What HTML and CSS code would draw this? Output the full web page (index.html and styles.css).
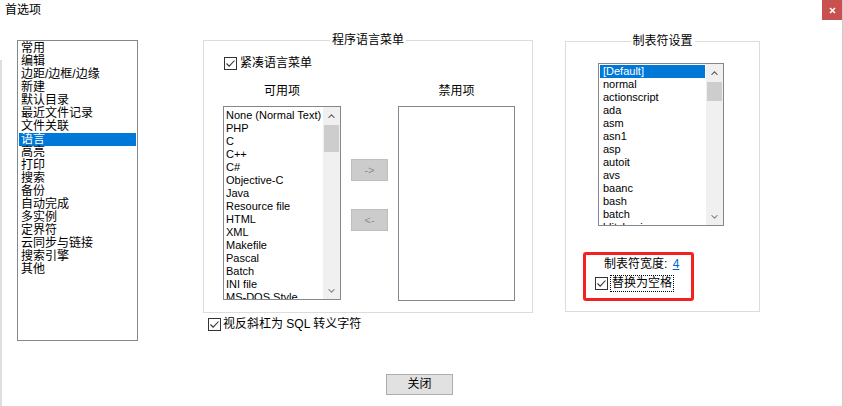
FILE: index.html
```html
<!DOCTYPE html>
<html lang="zh-CN">
<head>
<meta charset="utf-8">
<title>首选项</title>
<link rel="stylesheet" href="styles.css">
</head>
<body>
<div class="window">
  <div class="titlebar">
    <span class="title">首选项</span>
    <span class="close"><svg width="7" height="7" viewBox="0 0 7 7"><path d="M1 1L6 6M6 1L1 6" stroke="#fff" stroke-width="1.6"/></svg></span>
  </div>
  <div class="main">
    <div class="navlist">
      <div class="item">常用</div>
      <div class="item">编辑</div>
      <div class="item">边距/边框/边缘</div>
      <div class="item">新建</div>
      <div class="item">默认目录</div>
      <div class="item">最近文件记录</div>
      <div class="item">文件关联</div>
      <div class="item sel">语言</div>
      <div class="item">高亮</div>
      <div class="item">打印</div>
      <div class="item">搜索</div>
      <div class="item">备份</div>
      <div class="item">自动完成</div>
      <div class="item">多实例</div>
      <div class="item">定界符</div>
      <div class="item">云同步与链接</div>
      <div class="item">搜索引擎</div>
      <div class="item">其他</div>
    </div>
    <div class="midcol">
      <div class="group group-lang">
        <span class="gtitle">程序语言菜单</span>
        <div class="check">
          <span class="box"><svg width="11" height="11" viewBox="0 0 11 11"><path d="M1.5 5.5L4.2 8.2L9.5 2.5" fill="none" stroke="#333" stroke-width="1.1"/></svg></span>
          <span class="ctext">紧凑语言菜单</span>
        </div>
        <div class="lists">
          <div class="lcol">
            <div class="lcap">可用项</div>
            <div class="listbox lb-avail">
              <div class="items">
                <div class="row">None (Normal Text)</div>
                <div class="row">PHP</div>
                <div class="row">C</div>
                <div class="row">C++</div>
                <div class="row">C#</div>
                <div class="row">Objective-C</div>
                <div class="row">Java</div>
                <div class="row">Resource file</div>
                <div class="row">HTML</div>
                <div class="row">XML</div>
                <div class="row">Makefile</div>
                <div class="row">Pascal</div>
                <div class="row">Batch</div>
                <div class="row">INI file</div>
                <div class="row">MS-DOS Style</div>
              </div>
              <div class="sb sb-avail">
                <div class="arrow"><svg width="7" height="4" viewBox="0 0 7 4"><path d="M0.5 3.8L3.5 0.8L6.5 3.8" fill="none" stroke="#606060" stroke-width="1.1"/></svg></div>
                <div class="thumb"></div>
                <div class="track"></div>
                <div class="arrow"><svg width="7" height="4" viewBox="0 0 7 4"><path d="M0.5 0.2L3.5 3.2L6.5 0.2" fill="none" stroke="#8a8a8a" stroke-width="1.1"/></svg></div>
              </div>
            </div>
          </div>
          <div class="movebtns">
            <div class="mbtn">-&gt;</div>
            <div class="mbtn">&lt;-</div>
          </div>
          <div class="lcol">
            <div class="lcap">禁用项</div>
            <div class="listbox lb-disabled"></div>
          </div>
        </div>
      </div>
      <div class="check sqlcheck">
        <span class="box"><svg width="11" height="11" viewBox="0 0 11 11"><path d="M1.5 5.5L4.2 8.2L9.5 2.5" fill="none" stroke="#333" stroke-width="1.1"/></svg></span>
        <span class="ctext">视反斜杠为 SQL 转义字符</span>
      </div>
    </div>
    <div class="group group-tab">
      <span class="gtitle">制表符设置</span>
      <div class="listbox lb-tab">
        <div class="items">
          <div class="row sel">[Default]</div>
          <div class="row">normal</div>
          <div class="row">actionscript</div>
          <div class="row">ada</div>
          <div class="row">asm</div>
          <div class="row">asn1</div>
          <div class="row">asp</div>
          <div class="row">autoit</div>
          <div class="row">avs</div>
          <div class="row">baanc</div>
          <div class="row">bash</div>
          <div class="row">batch</div>
          <div class="row">blitzbasic</div>
        </div>
        <div class="sb sb-tab">
          <div class="arrow"><svg width="7" height="4" viewBox="0 0 7 4"><path d="M0.5 3.8L3.5 0.8L6.5 3.8" fill="none" stroke="#606060" stroke-width="1.1"/></svg></div>
          <div class="thumb"></div>
          <div class="track"></div>
          <div class="arrow"><svg width="7" height="4" viewBox="0 0 7 4"><path d="M0.5 0.2L3.5 3.2L6.5 0.2" fill="none" stroke="#8a8a8a" stroke-width="1.1"/></svg></div>
        </div>
      </div>
      <div class="redbox">
        <div class="tabwidth">制表符宽度: <span class="link">4</span></div>
        <div class="check replace">
          <span class="box"><svg width="11" height="11" viewBox="0 0 11 11"><path d="M1.5 5.5L4.2 8.2L9.5 2.5" fill="none" stroke="#333" stroke-width="1.1"/></svg></span>
          <span class="focus">替换为空格</span>
        </div>
      </div>
    </div>
  </div>
  <div class="footer">
    <div class="btn-close">关闭</div>
  </div>
</div>
</body>
</html>
```

FILE: styles.css
```css
* {
  box-sizing: border-box;
  margin: 0;
  padding: 0;
}

body {
  margin: 0;
  background: #fff;
  font-family: "Liberation Sans", "Noto Sans CJK SC", sans-serif;
  font-size: 12px;
  color: #000;
}

.window {
  width: 843px;
  height: 406px;
  display: flex;
  flex-direction: column;
  border-right: 1px solid #cccccc;
  background:
    linear-gradient(#fff, #fff) 0 0 / 2px 60px no-repeat,
    linear-gradient(to right, #dedede 2px, #fff 2px);
}

.titlebar {
  height: 20px;
  display: flex;
  justify-content: space-between;
  padding-left: 5px;
}

.title {
  font-size: 12px;
  line-height: 20px;
}

.close {
  width: 20px;
  height: 20px;
  background: #c8504e;
  display: flex;
  align-items: center;
  justify-content: center;
}

.main {
  display: flex;
  align-items: flex-start;
  margin-top: 20px;
  padding-left: 17px;
}

.navlist {
  width: 121px;
  height: 301px;
  border: 1px solid #828790;
  padding: 1px;
}

.navlist .item {
  height: 13px;
  line-height: 13px;
  padding-left: 2px;
  white-space: nowrap;
}

.sel {
  background: #0078d7;
  color: #fff;
}

.midcol {
  margin-left: 65px;
  display: flex;
  flex-direction: column;
}

.group {
  border: 1px solid #dcdcdc;
  position: relative;
}

.gtitle {
  position: absolute;
  top: -8px;
  left: 50%;
  transform: translateX(-50%);
  background: #fff;
  padding: 0 2px;
  line-height: 14px;
  white-space: nowrap;
}

.group-lang {
  width: 330px;
  height: 273px;
  padding: 16px 0 0 20px;
}

.check {
  display: flex;
  align-items: center;
  height: 13px;
  line-height: 13px;
  white-space: nowrap;
}

.box {
  width: 13px;
  height: 13px;
  border: 1px solid #333;
  background: #fff;
  margin-right: 3px;
  display: flex;
  flex: none;
}

.lists {
  display: flex;
  margin-top: 15px;
  margin-left: -1px;
}

.lcap {
  height: 21px;
  line-height: 13px;
  text-align: center;
}

.listbox {
  border: 1px solid #828790;
  display: flex;
  background: #fff;
}

.items {
  flex: 1;
  padding: 1px;
  overflow: hidden;
}

.items .row {
  height: 13px;
  line-height: 13px;
  font-size: 11px;
  white-space: nowrap;
}

.lb-avail {
  width: 118px;
  height: 194px;
}

.lb-avail .items {
  padding-top: 2px;
  padding-left: 2px;
}

.sb {
  width: 17px;
  background: #f0f0f0;
  display: flex;
  flex-direction: column;
  flex: none;
}

.sb .arrow {
  height: 17px;
  display: flex;
  align-items: center;
  justify-content: center;
  flex: none;
}

.sb .thumb {
  margin: 1px 1px 0;
  background: #cdcdcd;
  flex: none;
}

.sb .track {
  flex: 1;
}

.sb-avail .thumb {
  height: 27px;
}

.sb-tab .thumb {
  height: 19px;
}

.movebtns {
  width: 37px;
  margin: 0 10px;
  padding-top: 74px;
  display: flex;
  flex-direction: column;
  gap: 28px;
}

.mbtn {
  height: 22px;
  background: #cccccc;
  border: 1px solid #bfbfbf;
  color: #8c8c8c;
  font-size: 11px;
  line-height: 20px;
  text-align: center;
}

.lb-disabled {
  width: 117px;
  height: 195px;
}

.sqlcheck {
  margin-top: 5px;
  margin-left: 5px;
}

.sqlcheck .box {
  margin-right: 2px;
}

.group-tab {
  width: 195px;
  height: 271px;
  margin-left: 32px;
  margin-top: 1px;
  padding: 21px 0 0 32px;
}

.lb-tab {
  width: 126px;
  height: 163px;
}

.lb-tab .row {
  padding-left: 3px;
}

.redbox {
  margin-left: -15px;
  margin-top: 26px;
  width: 111px;
  height: 49px;
  border: 3px solid #f52020;
  border-radius: 3px;
  padding: 3px 0 0 18px;
}

.tabwidth {
  line-height: 13px;
  white-space: nowrap;
}

.link {
  color: #0066cc;
  text-decoration: underline;
  margin-left: 2px;
}

.replace {
  margin-top: 4px;
  margin-left: -9px;
  height: 17px;
}

.replace .box {
  margin-right: 2px;
}

.focus {
  border: 1px dotted #000;
  padding: 0 1px;
  line-height: 15px;
}

.footer {
  margin-top: 33px;
  padding-left: 386px;
}

.btn-close {
  width: 67px;
  height: 21px;
  background: #e1e1e1;
  border: 1px solid #adadad;
  text-align: center;
  line-height: 19px;
}
```
